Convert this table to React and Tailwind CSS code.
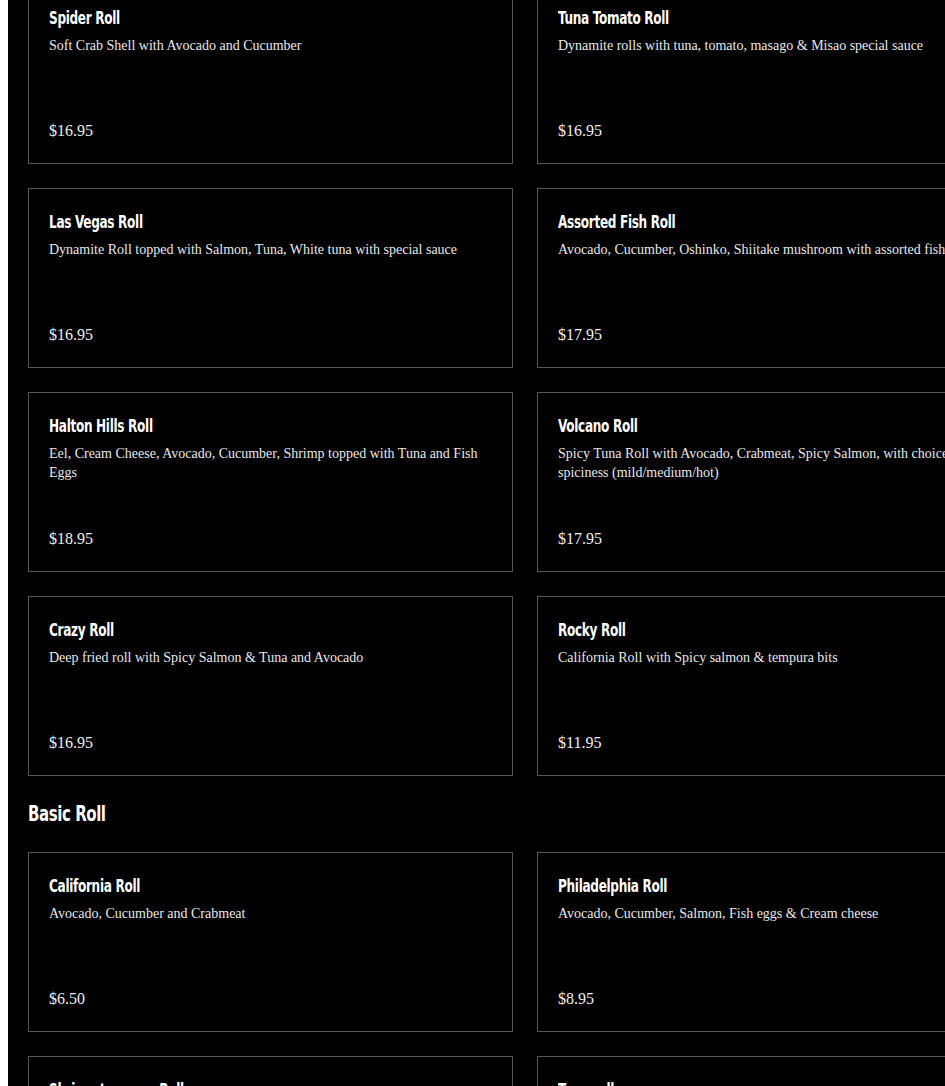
import React from "react";

const titleFont = { fontFamily: '"DejaVu Sans", sans-serif', fontStretch: "condensed" };

const section1 = [
  { t: "Spider Roll", d: "Soft Crab Shell with Avocado and Cucumber", p: "$16.95" },
  { t: "Tuna Tomato Roll", d: "Dynamite rolls with tuna, tomato, masago & Misao special sauce", p: "$16.95" },
  { t: "Las Vegas Roll", d: "Dynamite Roll topped with Salmon, Tuna, White tuna with special sauce", p: "$16.95" },
  { t: "Assorted Fish Roll", d: "Avocado, Cucumber, Oshinko, Shiitake mushroom with assorted fish", p: "$17.95" },
  { t: "Halton Hills Roll", d: "Eel, Cream Cheese, Avocado, Cucumber, Shrimp topped with Tuna and Fish Eggs", p: "$18.95" },
  { t: "Volcano Roll", d: "Spicy Tuna Roll with Avocado, Crabmeat, Spicy Salmon, with choice of spiciness (mild/medium/hot)", p: "$17.95" },
  { t: "Crazy Roll", d: "Deep fried roll with Spicy Salmon & Tuna and Avocado", p: "$16.95" },
  { t: "Rocky Roll", d: "California Roll with Spicy salmon & tempura bits", p: "$11.95" },
];

const section2 = [
  { t: "California Roll", d: "Avocado, Cucumber and Crabmeat", p: "$6.50" },
  { t: "Philadelphia Roll", d: "Avocado, Cucumber, Salmon, Fish eggs & Cream cheese", p: "$8.95" },
  { t: "Shrimp tempura Roll", d: "Shrimp tempura, Avocado and Cucumber", p: "$8.95" },
  { t: "Tuna roll", d: "Tuna", p: "$6.50" },
];

function Card({ item }) {
  return (
    <div className="h-[180px] border border-[#555555] flex flex-col px-5 pt-5 pb-5 bg-black">
      <div className="text-[17px] leading-[26px] font-bold text-white tracking-[-0.4px]" style={titleFont}>
        <span className="inline-block origin-left scale-x-[0.79] whitespace-nowrap">{item.t}</span>
      </div>
      <div className="mt-[5px] text-[14px] leading-[19px] text-[#e8e8e8] font-['Liberation_Serif',serif]">
        {item.d}
      </div>
      <div className="mt-auto text-[16px] leading-[24px] text-[#f0f0f0] font-['Liberation_Serif',serif]">
        {item.p}
      </div>
    </div>
  );
}

export default function App() {
  return (
    <div className="w-[945px] h-[1086px] overflow-hidden bg-white">
      <div className="ml-[8px] w-[1100px] h-full bg-black flow-root">
        <div className="pl-[20px] mt-[-16px]">
          <div className="grid grid-cols-[485px_485px] gap-[24px]">
            {section1.map((it) => (
              <Card key={it.t} item={it} />
            ))}
          </div>
          <h2 className="mt-[24px] mb-[24px] text-[22px] leading-[28px] font-bold text-white tracking-[-0.6px]" style={titleFont}>
            <span className="inline-block origin-left scale-x-[0.76]">Basic Roll</span>
          </h2>
          <div className="grid grid-cols-[485px_485px] gap-[24px]">
            {section2.map((it) => (
              <Card key={it.t} item={it} />
            ))}
          </div>
        </div>
      </div>
    </div>
  );
}
